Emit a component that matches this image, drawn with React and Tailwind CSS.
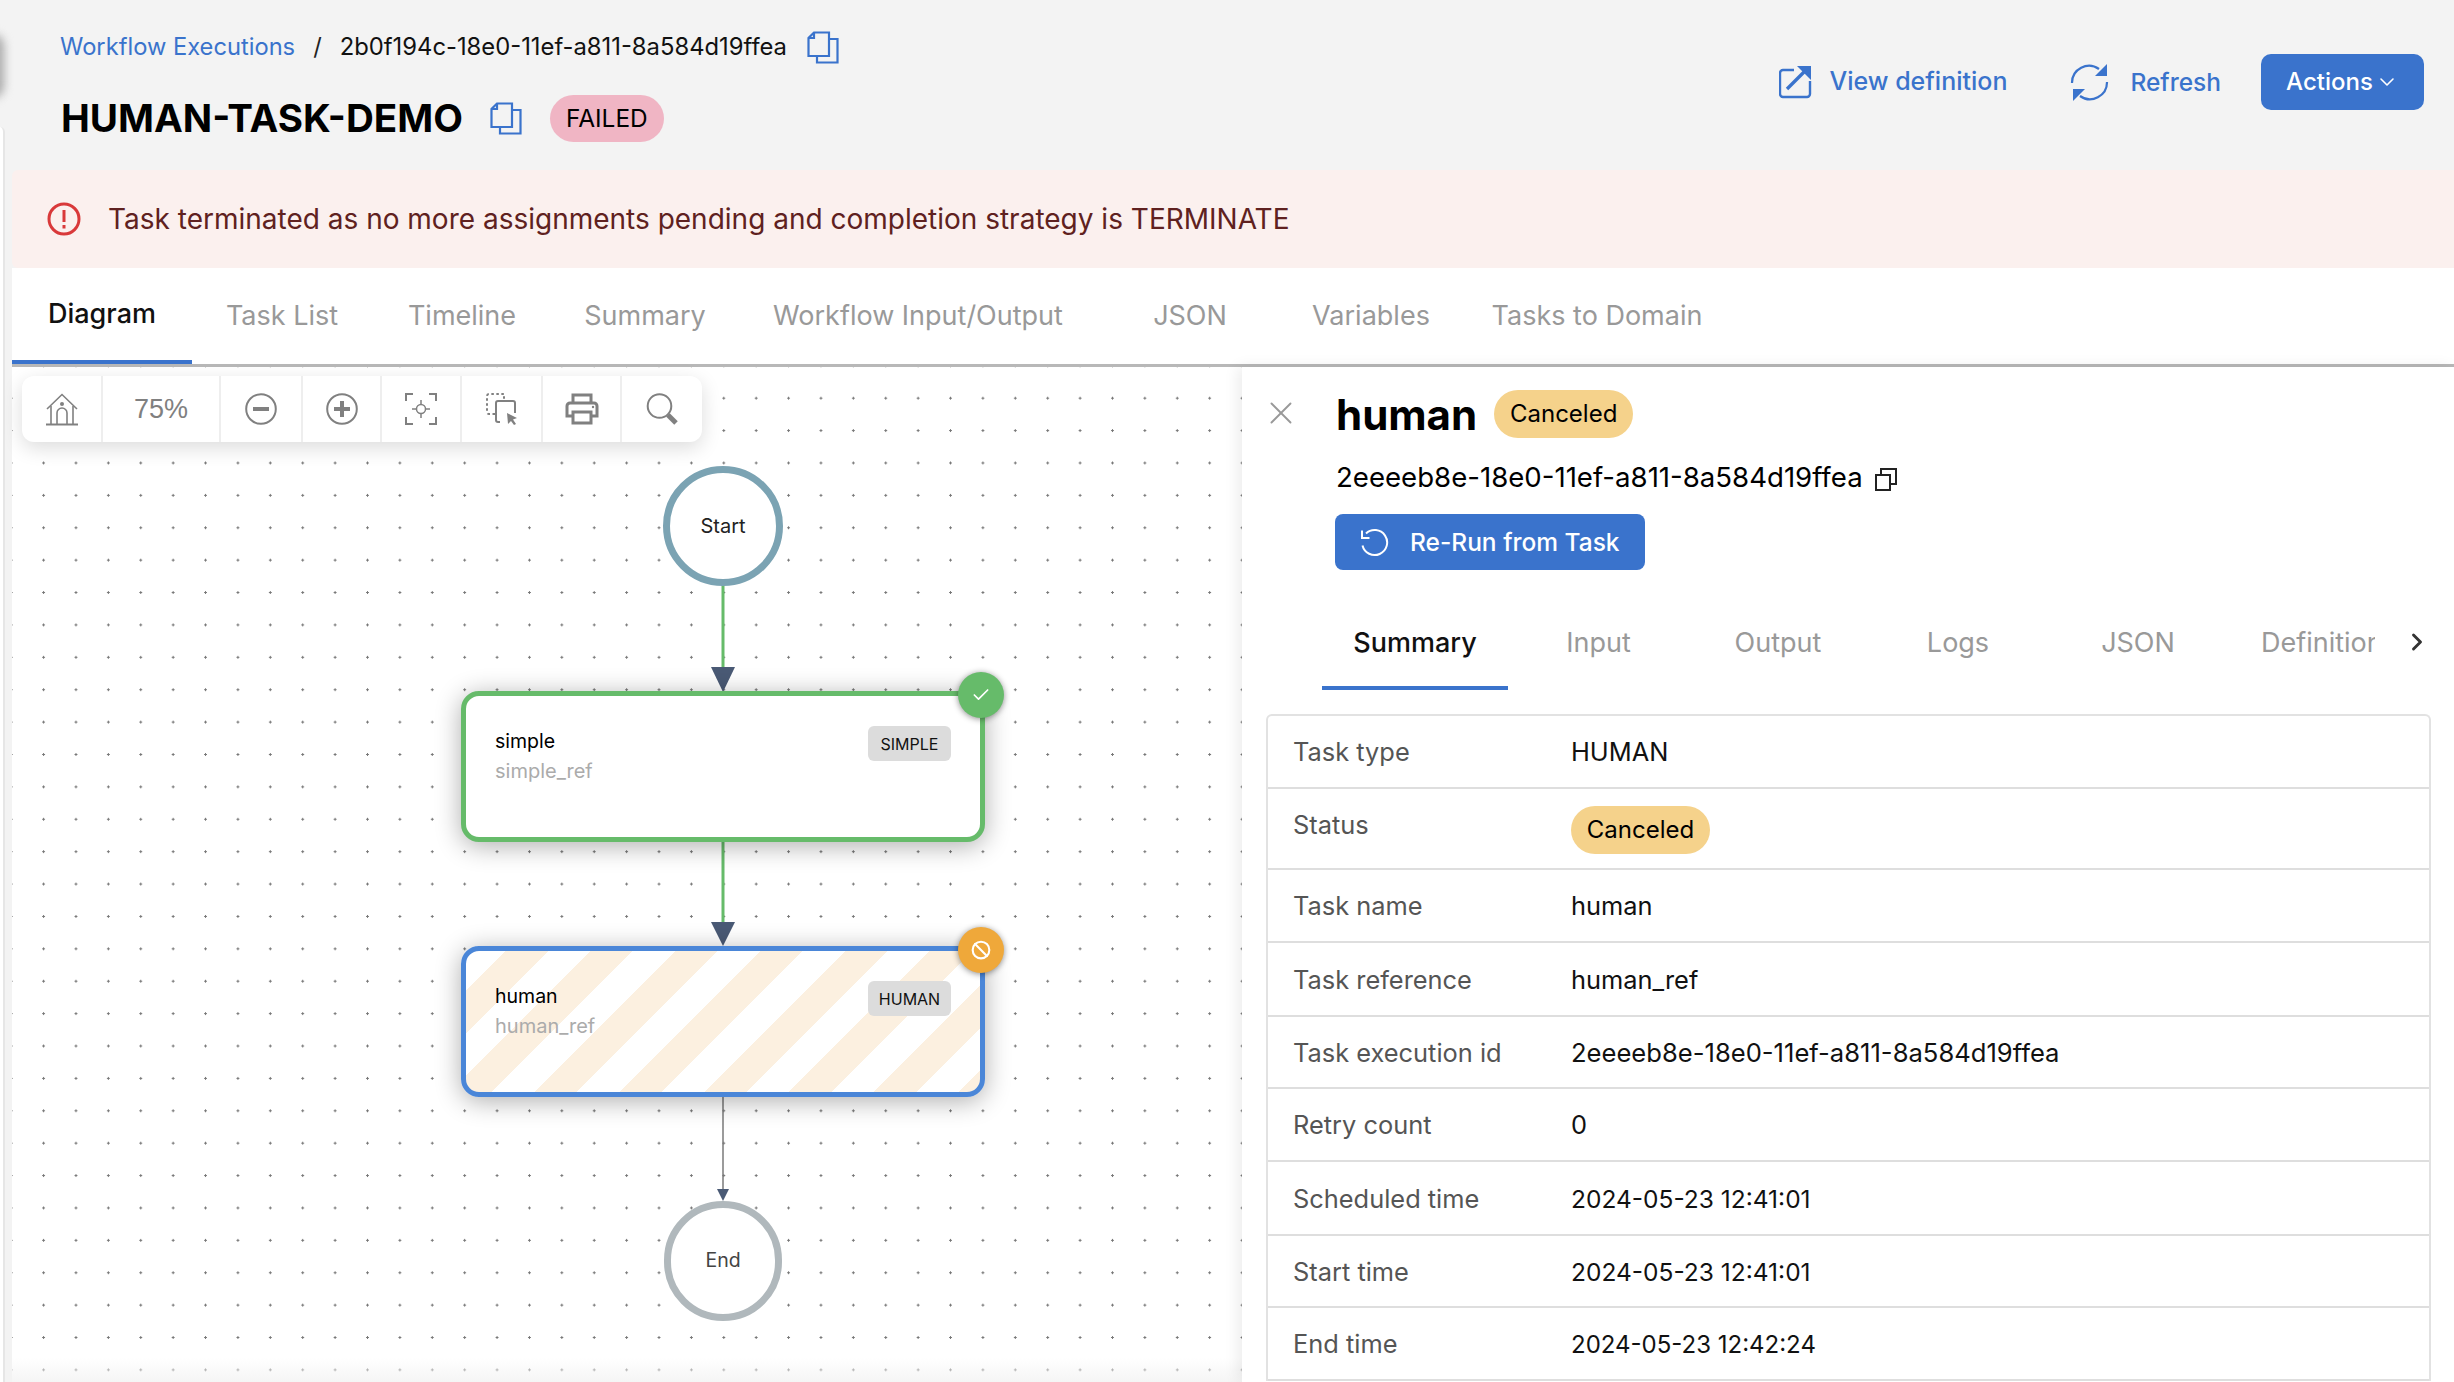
import { Ban, Check, ChevronDown, ChevronRight, X } from 'lucide-react';

const mainTabs = [
  ['Diagram', 'w-[180px]'], ['Task List', 'w-[180px]'], ['Timeline', 'w-[180px]'], ['Summary', 'w-[186px]'],
  ['Workflow Input/Output', 'w-[360px]'], ['JSON', 'w-[184px]'], ['Variables', 'w-[178px]'], ['Tasks to Domain', 'w-[274px]'],
];

const taskTabs = [
  ['Summary', 'w-[186px]'], ['Input', 'w-[181px]'], ['Output', 'w-[178px]'], ['Logs', 'w-[182px]'], ['JSON', 'w-[178px]'],
];

const rows = [
  ['Task type', 'HUMAN', 'h-[73px]', 'text-[25.4px]'],
  ['Status', null, 'h-[81px]', ''],
  ['Task name', 'human', 'h-[73px]', 'text-[25.4px]'],
  ['Task reference', 'human_ref', 'h-[74px]', 'text-[25.4px]'],
  ['Task execution id', '2eeeeb8e-18e0-11ef-a811-8a584d19ffea', 'h-[72px]', 'text-[25.6px]'],
  ['Retry count', '0', 'h-[73px]', 'text-[25.4px]'],
  ['Scheduled time', '2024-05-23 12:41:01', 'h-[74px]', 'text-[24.5px]'],
  ['Start time', '2024-05-23 12:41:01', 'h-[72px]', 'text-[24.5px]'],
  ['End time', '2024-05-23 12:42:24', 'h-[73px]', 'text-[24px]'],
];

function CopyIcon() {
  return (
    <svg width="32" height="33" viewBox="0 0 32 33" fill="none" stroke="#3a73cc" strokeWidth="2.2">
      <path d="M7 1.5H22V25H1.5V7Z" />
      <path d="M7 1.5V7H1.5" />
      <path d="M22 8H30.5V31.5H10V25" />
    </svg>
  );
}

function ToolCell({ className, children }) {
  return <div className={`flex h-full items-center justify-center border-r-2 border-[#eeeeee] last:border-r-0 ${className}`}>{children}</div>;
}

function Toolbar() {
  return (
    <div className="absolute left-[10px] top-[9px] flex h-[66px] rounded-xl bg-white shadow-[0_6px_20px_rgba(0,0,0,0.14)]">
      <ToolCell className="w-[81px]">
        <svg width="34" height="33" viewBox="0 0 34 33" fill="none" stroke="#808080" strokeWidth="1.6">
          <path d="M2 16L17 1.5L32 16" />
          <path d="M6 13V31M28 13V31" />
          <path d="M12 31V20a5 5 0 0 1 10 0V31" />
          <path d="M1 31.5H33" strokeWidth="2" />
          <circle cx="17" cy="11" r="2" fill="#808080" stroke="none" />
        </svg>
      </ToolCell>
      <ToolCell className="w-[118px] font-['Liberation_Sans',sans-serif] text-[27px] text-[#808080]">75%</ToolCell>
      <ToolCell className="w-[82px]">
        <svg width="32" height="32" viewBox="0 0 32 32" fill="none" stroke="#808080">
          <circle cx="16" cy="16" r="14.8" strokeWidth="2" />
          <path d="M8 16H24" strokeWidth="4" />
        </svg>
      </ToolCell>
      <ToolCell className="w-[79px]">
        <svg width="32" height="32" viewBox="0 0 32 32" fill="none" stroke="#808080">
          <circle cx="16" cy="16" r="14.8" strokeWidth="2" />
          <path d="M8 16H24M16 8V24" strokeWidth="4" />
        </svg>
      </ToolCell>
      <ToolCell className="w-[80px]">
        <svg width="32" height="32" viewBox="0 0 32 32" fill="none" stroke="#808080" strokeWidth="2">
          <path d="M1 8V1H8M24 1H31V8M31 24V31H24M8 31H1V24" />
          <circle cx="16" cy="16" r="4.5" strokeWidth="1.5" />
          <path d="M16 7V11M16 21V25M7 16H11M21 16H25" strokeWidth="1.5" />
        </svg>
      </ToolCell>
      <ToolCell className="w-[81px]">
        <svg width="32" height="32" viewBox="0 0 32 32" fill="none" stroke="#808080" strokeWidth="2">
          <path d="M9 21H3a2 2 0 0 1-2-2V3a2 2 0 0 1 2-2H18V6" strokeDasharray="2.5 2.5" />
          <path d="M14 29H12a2 2 0 0 1-2-2V10a2 2 0 0 1 2-2H27a2 2 0 0 1 2 2V20" />
          <path d="M21 20L31 25L27 26.5L30 31L28 32L25 28L22 31Z" fill="#808080" stroke="none" />
        </svg>
      </ToolCell>
      <ToolCell className="w-[79px]">
        <svg width="34" height="32" viewBox="0 0 34 32" fill="none" stroke="#808080" strokeWidth="3">
          <path d="M8 9V2H26V9" />
          <path d="M8 23H2V13a3 3 0 0 1 3-3H29a3 3 0 0 1 3 3V23H26" />
          <path d="M8 19H26V30H8Z" />
          <circle cx="28" cy="14" r="1.2" fill="#808080" stroke="none" />
        </svg>
      </ToolCell>
      <ToolCell className="w-[80px]">
        <svg width="33" height="32" viewBox="0 0 33 32" fill="none" stroke="#808080">
          <circle cx="13.5" cy="13" r="11.8" strokeWidth="2" />
          <path d="M22 22L30 30" strokeWidth="5" />
        </svg>
      </ToolCell>
    </div>
  );
}

function Edges() {
  return (
    <svg className="absolute left-0 top-0" width="1230" height="1015" fill="none">
      <path d="M711 215V300M711 470V560" stroke="#66bb6a" strokeWidth="3" />
      <path d="M711 725V825" stroke="#7a7a7a" strokeWidth="1.5" />
      <path d="M699 300H723L711 325Z" fill="#4a5a75" />
      <path d="M699 555H723L711 579Z" fill="#4a5a75" />
      <path d="M705 822H717L711 834Z" fill="#4a5a75" />
    </svg>
  );
}

function TaskNode({ className, name, refName, type, badge }) {
  return (
    <div className={`absolute flex h-[151px] w-[524px] justify-between rounded-[18px] border-[5px] pl-[29px] pr-[29px] pt-[31px] shadow-[0_4px_26px_rgba(0,0,0,0.32)] ${className}`}>
      <div>
        <div className="text-[19.5px] leading-[28px] text-black">{name}</div>
        <div className="mt-[2px] text-[20px] leading-[28px] text-[#ababab]">{refName}</div>
      </div>
      <div className="-mt-px flex h-[35px] w-[83px] items-center justify-center rounded-md bg-[#dcdcdc] text-[16px] text-[#111111]">{type}</div>
      {badge}
    </div>
  );
}

function Diagram() {
  return (
    <div className="relative h-full w-[1230px] bg-white bg-[radial-gradient(circle,#777777_1px,transparent_1.3px)] bg-[size:32.4px_32.4px] bg-[position:-17px_15px]">
      <Edges />
      <div className="absolute left-[651px] top-[99px] flex h-[120px] w-[120px] items-center justify-center rounded-full border-[7px] border-[#7ba3b3] bg-white text-[20px] text-[#222222]">Start</div>
      <TaskNode
        className="left-[449px] top-[324px] border-[#66bb6a] bg-white"
        name="simple"
        refName="simple_ref"
        type="SIMPLE"
        badge={
          <div className="absolute right-[-24px] top-[-24px] flex h-[46px] w-[46px] items-center justify-center rounded-full bg-[#66bb6a] shadow-[0_1px_6px_rgba(0,0,0,0.45)]">
            <Check size={20} color="white" strokeWidth={2} />
          </div>
        }
      />
      <TaskNode
        className="left-[449px] top-[579px] border-[#4a86d8] bg-[repeating-linear-gradient(135deg,#ffffff_0px,#ffffff_28px,#fcf0e0_28px,#fcf0e0_58px,#ffffff_58px,#ffffff_60px)]"
        name="human"
        refName="human_ref"
        type="HUMAN"
        badge={
          <div className="absolute right-[-24px] top-[-24px] flex h-[46px] w-[46px] items-center justify-center rounded-full bg-[#efa83a] shadow-[0_1px_6px_rgba(0,0,0,0.45)]">
            <Ban size={20} color="white" strokeWidth={2.5} />
          </div>
        }
      />
      <div className="absolute left-[652px] top-[834px] flex h-[120px] w-[118px] items-center justify-center rounded-full border-[7px] border-[#b0b8bc] bg-white text-[19.5px] text-[#444444]">End</div>
      <Toolbar />
      <div className="absolute bottom-0 left-0 h-[24px] w-full bg-gradient-to-t from-[#f5f5f5] to-transparent" />
    </div>
  );
}

function TaskPanel() {
  return (
    <div className="relative flex-1 overflow-hidden bg-white shadow-[-4px_0_14px_rgba(0,0,0,0.08)]">
      <X className="absolute left-[20px] top-[27px]" size={38} color="#999999" strokeWidth={1.2} />
      <div className="flex h-[71px] items-start pl-[94px]">
        <h2 className="mt-[19px] text-[42px] font-bold leading-[58px] text-black">human</h2>
        <span className="ml-[17px] mt-[23px] flex h-[48px] w-[139px] items-center justify-center rounded-full bg-[#f5d28b] text-[24px] text-black">Canceled</span>
      </div>
      <div className="mt-[25px] flex h-[30px] items-center pl-[94px] text-[27.6px] text-black">
        <span>2eeeeb8e-18e0-11ef-a811-8a584d19ffea</span>
        <svg className="ml-[12px] mt-[3px]" width="22" height="23" viewBox="0 0 22 23" fill="none" stroke="#222222" strokeWidth="2">
          <path d="M1 7H15V22H1Z" />
          <path d="M6 7V1H21V16H15" />
        </svg>
      </div>
      <button className="ml-[93px] mt-[21px] flex h-[56px] w-[310px] items-center rounded-lg bg-[#3a73cc] pl-[24px] text-[24.5px] font-medium text-white">
        <svg width="30" height="30" viewBox="0 0 30 30" fill="none" stroke="white" strokeWidth="2">
          <path d="M7 6.5a12.5 12.5 0 1 1-3.5 12" />
          <path d="M3 3.5V11H10.5" />
        </svg>
        <span className="ml-[21px]">Re-Run from Task</span>
      </button>
      <div className="mt-[47px] flex h-[73px] pl-[80px]">
        <div className="flex w-[1053px] overflow-hidden">
          {taskTabs.map(([label, width], i) => (
            <div key={label} className={`flex h-full shrink-0 items-start justify-center pt-[6px] text-[27px] ${width} ${i === 0 ? 'border-b-4 border-[#3a73cc] font-medium text-[#111111]' : 'text-[#999999]'}`}>{label}</div>
          ))}
          <div className="shrink-0 pl-[34px] pt-[6px] text-[27px] text-[#999999]">Definition</div>
        </div>
        <ChevronRight className="ml-[28px] mt-[11px]" size={28} color="#333333" strokeWidth={2.5} />
      </div>
      <div className="ml-[24px] mt-[24px] w-[1165px] rounded-t-md border-2 border-b-0 border-[#e2e2e2]">
        {rows.map(([label, value, height, size]) => (
          <div key={label} className={`flex items-center border-b-2 border-[#dedede] pl-[25px] text-[25.4px] ${height} ${value ? 'pt-[2px]' : ''}`}>
            <div className={`w-[278px] text-[#555555] ${value ? '' : 'mb-[6px]'}`}>{label}</div>
            {value ? (
              <div className={`text-[#111111] ${size}`}>{value}</div>
            ) : (
              <span className="mt-[2px] flex h-[48px] w-[139px] items-center justify-center rounded-full bg-[#f5d28b] text-[24px] text-black">Canceled</span>
            )}
          </div>
        ))}
      </div>
    </div>
  );
}

export default function App() {
  return (
    <div className="relative flex h-[1382px] w-[2454px] flex-col overflow-hidden bg-[#f3f3f3] pl-[12px] font-[Inter,sans-serif]">
      <div className="absolute left-[-20px] top-[34px] h-[64px] w-[24px] rounded-full bg-[#aaaaaa] blur-[5px]" />
      <div className="absolute bottom-0 left-0 top-[127px] w-[5px] rounded-tr-md border-r-2 border-[#e6e6e6] bg-white" />
      <header className="flex h-[170px] shrink-0 justify-between pl-[48px] pr-[30px]">
        <div>
          <div className="mt-[32px] flex h-[30px] items-center text-[23.7px]">
            <span className="text-[#3a73cc]">Workflow Executions</span>
            <span className="ml-[18px] text-[#222222]">/</span>
            <span className="ml-[18px] text-[23.8px] text-[#111111]">2b0f194c-18e0-11ef-a811-8a584d19ffea</span>
            <span className="ml-[20px]"><CopyIcon /></span>
          </div>
          <div className="mt-[33px] flex h-[47px] items-center pl-px">
            <h1 className="text-[38.6px] font-bold text-black">HUMAN-TASK-DEMO</h1>
            <span className="ml-[27px]"><CopyIcon /></span>
            <span className="ml-[28px] flex h-[47px] w-[114px] items-center justify-center rounded-full bg-[#f0b5c4] text-[24.4px] text-black">FAILED</span>
          </div>
        </div>
        <div className="mt-[54px] flex h-[56px] items-center text-[25px] font-medium text-[#3a73cc]">
          <svg width="33" height="34" viewBox="0 0 33 34" fill="none" stroke="#3a73cc" strokeWidth="2.4">
            <path d="M15 5H4a3 3 0 0 0-3 3V29a3 3 0 0 0 3 3H28a3 3 0 0 0 3-3V16" />
            <path d="M8 24L25 7" strokeWidth="3.4" />
            <path d="M18 1H32V15Z" fill="#3a73cc" stroke="none" />
          </svg>
          <span className="ml-[17px]">View definition</span>
          <svg className="ml-[63px]" width="39" height="39" viewBox="0 0 39 39" fill="none" stroke="#3a73cc" strokeWidth="2.2">
            <path d="M2 20A17 17 0 0 1 29 6" />
            <path d="M37 1V13H25Z" fill="#3a73cc" stroke="none" />
            <path d="M37 19A17 17 0 0 1 10 33" />
            <path d="M3 38V26H15Z" fill="#3a73cc" stroke="none" />
          </svg>
          <span className="ml-[21px] text-[24.5px]">Refresh</span>
          <button className="ml-[40px] flex h-[56px] w-[163px] items-center justify-center rounded-[10px] bg-[#3a73cc] text-[24px] text-white">
            Actions<ChevronDown className="ml-[2px]" size={24} strokeWidth={1.6} />
          </button>
        </div>
      </header>
      <div className="flex h-[98px] shrink-0 items-center rounded-l-md bg-[#fbf0ee] pl-[35px] text-[28px] text-[#5f2120]">
        <svg width="34" height="34" viewBox="0 0 34 34" fill="none" stroke="#d9393a" strokeWidth="3">
          <circle cx="17" cy="17" r="15" />
          <path d="M17 8V20M17 23V26.5" />
        </svg>
        <span className="ml-[27px]">Task terminated as no more assignments pending and completion strategy is TERMINATE</span>
      </div>
      <nav className="flex h-[99px] shrink-0 border-b-[3px] border-[#b8b8b8] bg-white">
        {mainTabs.map(([label, width], i) => (
          <div key={label} className={`flex h-full items-center justify-center text-[27px] ${width} ${i === 0 ? 'border-b-4 border-[#3a73cc] font-medium text-[#111111]' : 'text-[#999999]'}`}>{label}</div>
        ))}
      </nav>
      <main className="flex min-h-0 flex-1">
        <Diagram />
        <TaskPanel />
      </main>
    </div>
  );
}
